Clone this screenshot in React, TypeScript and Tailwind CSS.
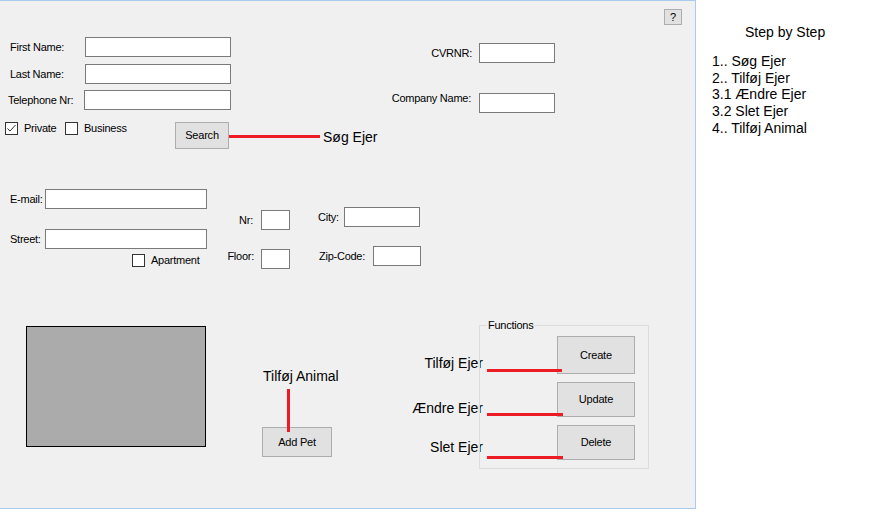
import React from 'react';

const TextBox = ({ className }: { className: string }) => (
  <input
    type="text"
    className={`h-[20px] border border-[#7a7a7a] bg-white outline-none ${className}`}
  />
);

const CheckBox = ({ checked = false }: { checked?: boolean }) => (
  <div className="w-[13px] h-[13px] border border-[#333333] bg-white flex items-center justify-center shrink-0">
    {checked && (
      <svg width="11" height="11" viewBox="0 0 11 11">
        <polyline points="1.5,5.5 4,8 9.5,2" fill="none" stroke="#333333" strokeWidth="1" />
      </svg>
    )}
  </div>
);

const Button = ({ label, className }: { label: string; className: string }) => (
  <button className={`bg-[#e1e1e1] border border-[#adadad] text-[11px] tracking-[-0.2px] text-black flex items-center justify-center shrink-0 ${className}`}>
    {label}
  </button>
);

const Note = ({ children, className = '' }: { children: React.ReactNode; className?: string }) => (
  <div className={`text-[14px] leading-[17px] text-black whitespace-nowrap ${className}`}>{children}</div>
);

export default function App() {
  const steps = ['1.. Søg Ejer', '2.. Tilføj Ejer', '3.1 Ændre Ejer', '3.2 Slet Ejer', '4.. Tilføj Animal'];

  return (
    <div className="flex w-[884px] h-[513px] bg-white font-['Liberation_Sans',Arial,sans-serif] text-black overflow-hidden">
      {/* WinForms form */}
      <div className="w-[696px] h-[509px] shrink-0 flex flex-col bg-[#f0f0f0] border-t border-r border-b border-[#a9cbee] text-[11px] leading-[13px] tracking-[-0.25px]">
        <div className="h-[8px]" />
        <div className="flex justify-end pr-[13px]">
          <Button label="?" className="w-[18px] h-[16px]" />
        </div>

        {/* Names + company */}
        <div className="flex items-start">
          <div className="w-[231px] pt-[12px] flex flex-col">
            <div className="flex items-center">
              <span className="flex-1 pl-[10px]">First Name:</span>
              <TextBox className="w-[146px]" />
            </div>
            <div className="flex items-center mt-[7px]">
              <span className="flex-1 pl-[10px]">Last Name:</span>
              <TextBox className="w-[146px]" />
            </div>
            <div className="flex items-center mt-[6px]">
              <span className="flex-1 pl-[8px]">Telephone Nr:</span>
              <TextBox className="w-[147px]" />
            </div>
          </div>
          <div className="w-[324px] pt-[18px] flex flex-col">
            <div className="flex items-center justify-end gap-[7px]">
              <span>CVRNR:</span>
              <TextBox className="w-[76px]" />
            </div>
            <div className="flex items-start justify-end gap-[8px] mt-[30px]">
              <span className="-mt-[1px]">Company Name:</span>
              <TextBox className="w-[76px]" />
            </div>
          </div>
        </div>

        {/* Private / Business / Search */}
        <div className="flex items-start mt-[9px]">
          <div className="w-[65px] flex items-center pl-[5px]">
            <CheckBox checked />
            <span className="ml-[6px]">Private</span>
          </div>
          <div className="w-[110px] flex items-center">
            <CheckBox />
            <span className="ml-[6px]">Business</span>
          </div>
          <Button label="Search" className="w-[54px] h-[27px]" />
          <div className="w-[91px] h-[3px] mt-[13px] bg-[#ed1c24]" />
          <Note className="ml-[3px] mt-[7px] tracking-normal">Søg Ejer</Note>
        </div>

        {/* Address */}
        <div className="flex items-start">
          <div className="w-[207px] pt-[40px] flex flex-col">
            <div className="flex items-center">
              <span className="flex-1 pl-[10px]">E-mail:</span>
              <TextBox className="w-[162px]" />
            </div>
            <div className="flex items-center mt-[20px]">
              <span className="flex-1 pl-[10px]">Street:</span>
              <TextBox className="w-[162px]" />
            </div>
            <div className="flex items-center mt-[5px] pl-[132px]">
              <CheckBox />
              <span className="ml-[6px]">Apartment</span>
            </div>
          </div>
          <div className="w-[83px] pt-[61px] flex flex-col">
            <div className="flex items-center justify-end gap-[8px]">
              <span>Nr:</span>
              <TextBox className="w-[29px]" />
            </div>
            <div className="flex items-start justify-end gap-[7px] mt-[19px]">
              <span className="mt-[1px]">Floor:</span>
              <TextBox className="w-[29px]" />
            </div>
          </div>
          <div className="pt-[58px] flex flex-col">
            <div className="flex items-center pl-[28px]">
              <span className="w-[26px]">City:</span>
              <TextBox className="w-[76px]" />
            </div>
            <div className="flex items-center pl-[29px] mt-[19px]">
              <span className="w-[54px]">Zip-Code:</span>
              <TextBox className="w-[48px]" />
            </div>
          </div>
        </div>

        {/* Picture, pets and functions */}
        <div className="flex items-start">
          <div className="ml-[26px] mt-[57px] w-[180px] h-[121px] border border-black bg-[#ababab] shrink-0" />
          <div className="ml-[56px] w-[78px] flex flex-col items-start">
            <Note className="mt-[99px] ml-[1px] tracking-normal">Tilføj Animal</Note>
            <div className="relative z-10 mt-[4px] ml-[25px] w-[3px] h-[43px] bg-[#ed1c24]" />
            <Button label="Add Pet" className="-mt-[5px] w-[70px] h-[30px]" />
          </div>
          <div className="w-[143px] flex flex-col items-end tracking-normal">
            <Note className="mt-[86px]">Tilføj Ejer</Note>
            <Note className="mt-[28px]">Ændre Ejer</Note>
            <Note className="mt-[22px]">Slet Ejer</Note>
          </div>
          <div className="relative -ml-[4px] mt-[56px] w-[170px] h-[144px] border border-[#dcdcdc] pl-[77px] pt-[10px] flex flex-col gap-[8px]">
            <span className="absolute -top-[7px] left-[7px] px-[1px] bg-[#f0f0f0]">Functions</span>
            <Button label="Create" className="w-[78px] h-[38px]" />
            <Button label="Update" className="w-[78px] h-[35px]" />
            <Button label="Delete" className="w-[78px] h-[35px]" />
            <div className="absolute z-10 left-[7px] top-[43px] w-[75px] h-[3px] bg-[#ed1c24]" />
            <div className="absolute z-10 left-[7px] top-[87px] w-[76px] h-[3px] bg-[#ed1c24]" />
            <div className="absolute z-10 left-[7px] top-[130px] w-[76px] h-[3px] bg-[#ed1c24]" />
          </div>
        </div>
      </div>

      {/* Step by step */}
      <div className="flex-1 flex flex-col text-[14px] leading-[17px]">
        <div className="mt-[24px] ml-[49px]">Step by Step</div>
        <div className="mt-[12px] ml-[16px] flex flex-col leading-[16.7px]">
          {steps.map((s) => (
            <div key={s}>{s}</div>
          ))}
        </div>
      </div>
    </div>
  );
}
